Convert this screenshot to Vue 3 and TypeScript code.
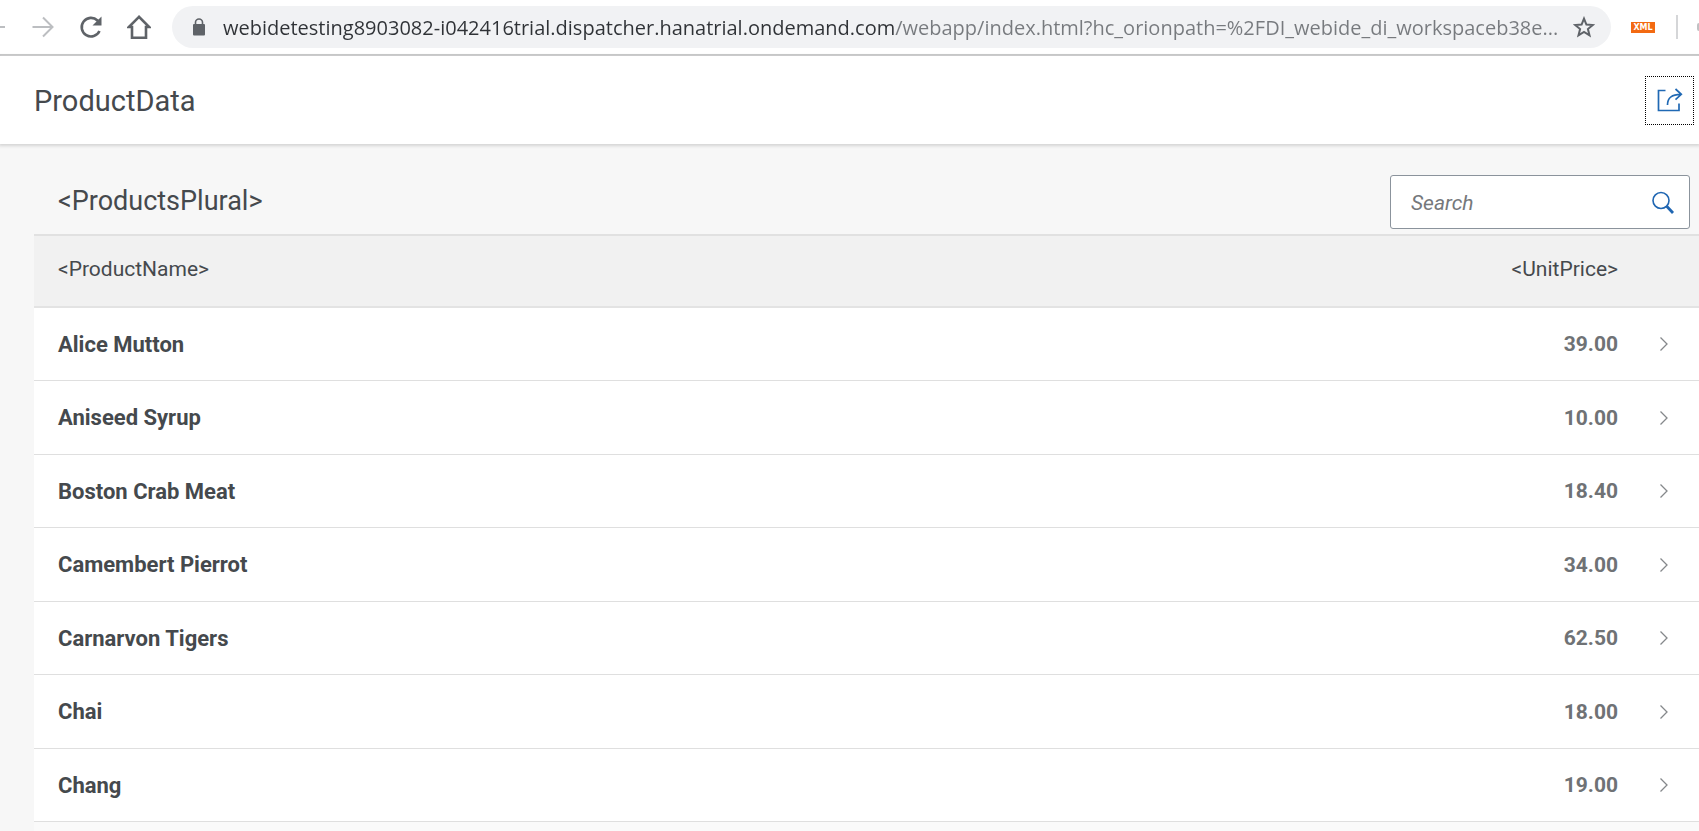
<script setup lang="ts">
import { ref, computed } from 'vue'

interface Product {
  name: string
  price: string
}

const products: Product[] = [
  { name: 'Alice Mutton', price: '39.00' },
  { name: 'Aniseed Syrup', price: '10.00' },
  { name: 'Boston Crab Meat', price: '18.40' },
  { name: 'Camembert Pierrot', price: '34.00' },
  { name: 'Carnarvon Tigers', price: '62.50' },
  { name: 'Chai', price: '18.00' },
  { name: 'Chang', price: '19.00' },
]

const address = ref<string>(
  'webidetesting8903082-i042416trial.dispatcher.hanatrial.ondemand.com/webapp/index.html?hc_orionpath=%2FDI_webide_di_workspaceb38e...',
)
const query = ref<string>('')
const visible = computed<Product[]>(() =>
  products.filter((p) => p.name.toLowerCase().includes(query.value.toLowerCase())),
)
</script>

<template>
  <div class="page">
    <nav class="browser" aria-label="Browser toolbar">
      <button class="tool back" type="button" aria-label="Back">
        <svg width="6" height="24" viewBox="0 0 6 24"><path d="M0 12H5" stroke="#bcbec1" stroke-width="2" /></svg>
      </button>
      <button class="tool" type="button" aria-label="Forward">
        <svg width="24" height="24" viewBox="0 0 24 24" fill="none" stroke="#bcbec1" stroke-width="2"><path d="M1.500 12H21.500M12 2.500L21.500 12L12 21.500" /></svg>
      </button>
      <button class="tool" type="button" aria-label="Reload">
        <svg width="24" height="24" viewBox="0 0 24 24" fill="none"><path d="M20.500 16A9.300 9.300 0 1 1 18.500 5.500L20 7" stroke="#5f6368" stroke-width="2.600" /><path d="M22.500 1.500V10.500H13.500Z" fill="#5f6368" /></svg>
      </button>
      <button class="tool" type="button" aria-label="Home">
        <svg width="24" height="24" viewBox="0 0 24 24" fill="none" stroke="#5f6368" stroke-width="2.600"><path d="M12 1.800L1.800 12H5V22.700H19V12H22.200Z" /></svg>
      </button>
      <div class="address">
        <svg class="lock" width="14" height="18" viewBox="0 0 14 18"><rect x="1" y="6" width="12" height="11.500" rx="1" fill="#5f6368" /><path d="M3.500 7V4.300a3.500 3.300 0 0 1 7 0V7" fill="none" stroke="#5f6368" stroke-width="1.600" /></svg>
        <input v-model="address" class="url" type="text" aria-label="Address" spellcheck="false" />
        <button class="tool" type="button" aria-label="Bookmark this page">
          <svg width="22" height="22" viewBox="0 0 22 22"><path d="M11 2.600L13.400 8.600L19.800 9L14.900 13.100L16.500 19.300L11 15.900L5.500 19.300L7.100 13.100L2.200 9L8.600 8.600Z" fill="none" stroke="#5f6368" stroke-width="2" /></svg>
        </button>
      </div>
      <button class="xml" type="button">XML</button>
      <span class="divider"></span>
      <span class="avatar"></span>
    </nav>

    <header class="title-bar">
      <h1>ProductData</h1>
      <button class="share" type="button" aria-label="Share">
        <svg width="26" height="24" viewBox="0 0 26 24" fill="none" stroke="#2069b4" stroke-width="1.700"><path d="M8.500 2.500H1.500V22.500H22V15.500" /><path d="M10.500 17C10.500 10 14 6.300 24 6.300M18.500 1L24.300 6.300L18.500 11.600" /></svg>
      </button>
    </header>

    <main class="content">
      <div class="toolbar">
        <h2>&lt;ProductsPlural&gt;</h2>
        <form class="search" role="search" @submit.prevent>
          <input v-model="query" type="text" placeholder="Search" aria-label="Search" />
          <button class="tool" type="submit" aria-label="Search products">
            <svg width="24" height="24" viewBox="0 0 24 24" fill="none" stroke="#1f66b2"><circle cx="10" cy="9.500" r="8" stroke-width="1.600" /><path d="M15.500 15L22 22" stroke-width="2.800" /></svg>
          </button>
        </form>
      </div>
      <div class="list">
        <table>
          <thead>
            <tr>
              <th class="name" scope="col">&lt;ProductName&gt;</th>
              <th class="price" scope="col">&lt;UnitPrice&gt;</th>
              <td class="nav"></td>
            </tr>
          </thead>
          <tbody>
            <tr v-for="product in visible" :key="product.name">
              <td class="name">{{ product.name }}</td>
              <td class="price">{{ product.price }}</td>
              <td class="nav">
                <button class="tool" type="button" :aria-label="`Open ${product.name}`">
                  <svg width="10" height="16" viewBox="0 0 10 16"><path d="M1.500 1.500L8 8L1.500 14.500" fill="none" stroke="#85888b" stroke-width="1.300" /></svg>
                </button>
              </td>
            </tr>
          </tbody>
        </table>
      </div>
    </main>
  </div>
</template>

<style>
body {
  margin: 0;
  background: #f7f7f7;
}
</style>

<style scoped>
.page {
  height: 100vh;
  overflow: hidden;
  display: flex;
  flex-direction: column;
  background: #f7f7f7;
  color: #45494d;
  font-family: Roboto, "Liberation Sans", sans-serif;
  font-size: 21px;
}
button {
  padding: 0;
  border: 0;
  background: none;
  font: inherit;
  cursor: pointer;
}
.tool {
  display: flex;
}
svg {
  display: block;
  flex: none;
}
.browser {
  flex: none;
  display: flex;
  align-items: center;
  gap: 24px;
  height: 54px;
  background: #fff;
  border-bottom: 2px solid #c3c4c5;
}
.address {
  flex: 1;
  min-width: 0;
  display: flex;
  align-items: center;
  height: 42px;
  margin-left: -3px;
  margin-right: -4px;
  padding: 0 16px 0 20px;
  border-radius: 21px;
  background: #f1f2f4;
}
.back {
  margin-right: 1px;
}
.url {
  flex: 1;
  min-width: 0;
  height: 32px;
  margin-left: 17px;
  padding: 0;
  border: 0;
  outline: 0;
  color: #74777b;
  font-family: "Open Sans", "Noto Sans", sans-serif;
  font-size: 20px;
  background: linear-gradient(to right, #2f3236 671px, #777a7e 671px);
  background-clip: text;
  -webkit-text-fill-color: transparent;
}
.xml {
  width: 24px;
  height: 11px;
  background: #f36a12;
  color: #fff;
  font-family: "DejaVu Sans", sans-serif;
  font-size: 8px;
  font-weight: 700;
  line-height: 11px;
}
.divider {
  width: 2px;
  height: 24px;
  margin-left: -3px;
  background: #d5d6d8;
}
.avatar {
  width: 2px;
  height: 8px;
  margin-left: -5px;
  border-radius: 4px 0 0 4px;
  background: #bfc1c3;
}
.title-bar {
  flex: none;
  display: flex;
  align-items: center;
  justify-content: space-between;
  height: 88px;
  padding: 0 5px 0 34px;
  background: #fff;
  box-shadow: 0 1px 3px 1px #d4d4d4;
}
h1,
h2 {
  margin: 0;
  font-weight: 400;
  line-height: 36px;
}
h1 {
  padding-top: 2px;
  font-size: 29px;
}
h2 {
  padding-top: 8px;
  font-size: 27px;
}
.share {
  box-sizing: border-box;
  display: flex;
  align-items: center;
  justify-content: center;
  width: 49px;
  height: 49px;
  border: 1px dotted #000;
}
.content {
  flex: 1;
  min-height: 0;
  display: flex;
  flex-direction: column;
  padding: 31px 0 0 34px;
}
.toolbar {
  display: flex;
  justify-content: space-between;
  padding: 0 9px 5px 24px;
}
.search {
  box-sizing: border-box;
  display: flex;
  align-items: center;
  width: 300px;
  height: 54px;
  padding: 1px 14px 0 20px;
  border: 1px solid #8b939c;
  border-radius: 3px;
  background: #fff;
}
.search input {
  flex: 1;
  min-width: 0;
  padding: 0;
  border: 0;
  outline: 0;
  background: none;
  font: inherit;
  color: #45494d;
}
.search input::placeholder {
  color: #75787b;
  font-style: italic;
  opacity: 1;
}
.list {
  flex: 1;
  background: #fafafa;
}
table {
  width: 100%;
  border-collapse: separate;
  border-spacing: 0;
  table-layout: fixed;
}
th,
td {
  box-sizing: border-box;
  padding: 0;
}
thead th,
thead td {
  height: 74px;
  padding-bottom: 4px;
  border-top: 2px solid #e1e1e1;
  border-bottom: 2px solid #e3e3e3;
  background: #f1f1f1;
  font-weight: 400;
}
tbody td {
  height: 73px;
  border-bottom: 1px solid #dfdfdf;
  background: #fff;
  font-weight: 700;
}
tbody tr:nth-child(even) td {
  height: 74px;
}
th.name,
td.name {
  padding-left: 24px;
  text-align: left;
}
tbody .name {
  font-size: 22px;
}
.price {
  width: 200px;
  text-align: right;
}
tbody .price {
  color: #6f7275;
}
td.nav {
  width: 81px;
}
.nav .tool {
  margin-left: 41px;
}
</style>
